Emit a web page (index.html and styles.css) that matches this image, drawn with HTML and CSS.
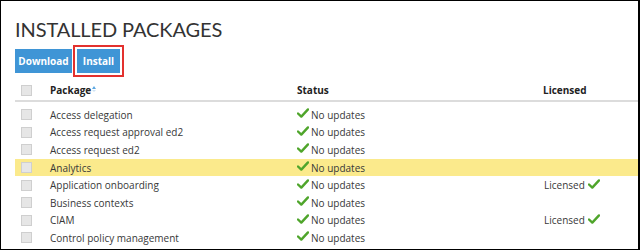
FILE: index.html
```html
<!DOCTYPE html>
<html lang="en">
<head>
  <meta charset="UTF-8">
  <title>Installed Packages</title>
  <link rel="stylesheet" href="styles.css">
</head>
<body>
  <div class="frame">
    <h1 class="page-title">INSTALLED PACKAGES</h1>

    <div class="toolbar">
      <button class="btn btn-download">Download</button>
      <span class="focus-ring"><button class="btn btn-install">Install</button></span>
    </div>

    <div class="packages">
      <div class="row head">
        <span class="box"></span>
        <span class="sortable">Package<span class="sort"><i class="up"></i><i class="down"></i></span></span>
        <span>Status</span>
        <span>Licensed</span>
      </div>

      <div class="row">
        <span class="box"></span><span>Access delegation</span>
        <span class="status"><svg class="tick" viewBox="0 0 12 10"><path d="M1 5.5 4.3 8.6 11 1.4"/></svg>No updates</span><span></span>
      </div>
      <div class="row">
        <span class="box"></span><span>Access request approval ed2</span>
        <span class="status"><svg class="tick" viewBox="0 0 12 10"><path d="M1 5.5 4.3 8.6 11 1.4"/></svg>No updates</span><span></span>
      </div>
      <div class="row">
        <span class="box"></span><span>Access request ed2</span>
        <span class="status"><svg class="tick" viewBox="0 0 12 10"><path d="M1 5.5 4.3 8.6 11 1.4"/></svg>No updates</span><span></span>
      </div>
      <div class="row selected">
        <span class="box"></span><span>Analytics</span>
        <span class="status"><svg class="tick" viewBox="0 0 12 10"><path d="M1 5.5 4.3 8.6 11 1.4"/></svg>No updates</span><span></span>
      </div>
      <div class="row">
        <span class="box"></span><span>Application onboarding</span>
        <span class="status"><svg class="tick" viewBox="0 0 12 10"><path d="M1 5.5 4.3 8.6 11 1.4"/></svg>No updates</span>
        <span class="licensed">Licensed<svg class="tick" viewBox="0 0 12 10"><path d="M1 5.5 4.3 8.6 11 1.4"/></svg></span>
      </div>
      <div class="row">
        <span class="box"></span><span>Business contexts</span>
        <span class="status"><svg class="tick" viewBox="0 0 12 10"><path d="M1 5.5 4.3 8.6 11 1.4"/></svg>No updates</span><span></span>
      </div>
      <div class="row">
        <span class="box"></span><span>CIAM</span>
        <span class="status"><svg class="tick" viewBox="0 0 12 10"><path d="M1 5.5 4.3 8.6 11 1.4"/></svg>No updates</span>
        <span class="licensed">Licensed<svg class="tick" viewBox="0 0 12 10"><path d="M1 5.5 4.3 8.6 11 1.4"/></svg></span>
      </div>
      <div class="row">
        <span class="box"></span><span>Control policy management</span>
        <span class="status"><svg class="tick" viewBox="0 0 12 10"><path d="M1 5.5 4.3 8.6 11 1.4"/></svg>No updates</span><span></span>
      </div>
    </div>
  </div>
</body>
</html>
```

FILE: styles.css
```css
* {
  box-sizing: border-box;
  margin: 0;
  padding: 0;
}

body {
  font-family: "Open Sans", Arial, sans-serif;
  font-size: 10px;
  color: #383838;
  background-color: white;
}

.frame {
  width: 640px;
  height: 250px;
  border: 1px solid #000;
  border-right-width: 2px;
  padding-left: 14px;
  overflow: hidden;
}

.page-title {
  font-family: Lato, "Open Sans", sans-serif;
  font-weight: 400;
  font-size: 20px;
  letter-spacing: -0.1px;
  color: #333;
  line-height: 28px;
  margin-top: 14px;
}

.toolbar {
  display: flex;
  align-items: center;
  margin-top: 2px;
  height: 32px;
}

.btn {
  font-family: "Open Sans", Arial, sans-serif;
  font-size: 10px;
  font-weight: 700;
  color: white;
  background-color: #3f95d6;
  border: none;
  height: 24px;
  text-align: center;
}

.btn-download {
  width: 57px;
}

.btn-install {
  width: 43px;
}

.focus-ring {
  display: flex;
  align-items: center;
  width: 51px;
  height: 32px;
  margin-left: 1px;
  border: 2px solid #e3312e;
  padding: 0 2px;
}

.packages {
  margin-top: 3px;
}

.row {
  display: grid;
  grid-template-columns: 35px 247px 246px 1fr;
  align-items: center;
  height: 17.6px;
}

.row.head {
  height: 22px;
  font-weight: 700;
  color: #222;
  border-bottom: 2px solid #dcdcdc;
  margin-bottom: 4px;
}

.row.selected {
  background-color: #fbea8c;
}

.box {
  width: 11px;
  height: 11px;
  margin-left: 6px;
  background-color: #e6e6e6;
  border: 1px solid #cfcfcf;
}

.sortable {
  display: flex;
  align-items: center;
}

.sort {
  display: flex;
  flex-direction: column;
  gap: 1px;
  margin-left: 1px;
  margin-top: -2px;
}

.sort i {
  width: 0;
  height: 0;
  border-left: 2.5px solid transparent;
  border-right: 2.5px solid transparent;
}

.sort .up {
  border-bottom: 3px solid #5ea8e2;
}

.sort .down {
  border-top: 2px solid #cfe3f4;
}

.status {
  display: flex;
  align-items: center;
}

.tick {
  width: 12px;
  height: 10px;
  fill: none;
  stroke: #4fa52b;
  stroke-width: 2.4;
  stroke-linecap: round;
  stroke-linejoin: round;
}

.status .tick {
  margin-right: 2px;
  margin-top: -3px;
}

.licensed {
  display: flex;
  align-items: center;
  padding-left: 1px;
}

.licensed .tick {
  margin-left: 3px;
  margin-top: -3px;
}
```
